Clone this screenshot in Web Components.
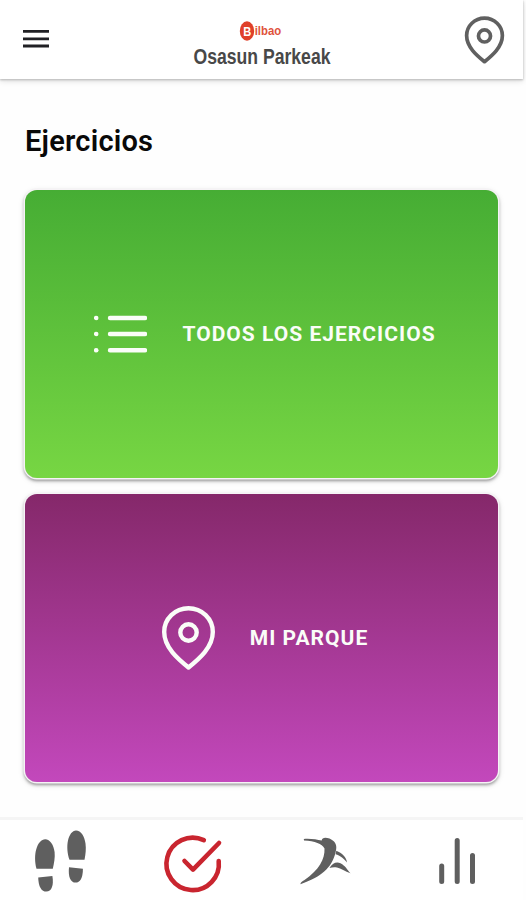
<!DOCTYPE html>
<html lang="es">
<head>
<meta charset="utf-8">
<title>Osasun Parkeak</title>
<style>
html, body { margin: 0; background: #fefefe; }
body { width: 526px; height: 900px; overflow: hidden; font-family: Roboto, "Liberation Sans", sans-serif; }
</style>
</head>
<body>
<park-app></park-app>
<script>
const define = (name, html) => {
  const template = document.createElement('template');
  template.innerHTML = html;
  customElements.define(name, class extends HTMLElement {
    constructor() {
      super();
      this.attachShadow({ mode: 'open' }).append(template.content.cloneNode(true));
    }
  });
};

define('pin-icon', `
<style>:host{display:block;flex:none} svg{display:block;width:100%;height:100%;overflow:visible} path,circle{stroke-width:var(--pin-stroke,4.400)}</style>
<svg viewBox="0 0 53 64" fill="none" stroke="currentColor" stroke-linejoin="round">
  <path d="M26.500 61.500C16 53 2.200 41.500 2.200 26A24.300 23.800 0 0 1 50.800 26C50.800 41.500 37 53 26.500 61.500Z"/>
  <circle cx="26.500" cy="26.500" r="8.200"/>
</svg>`);

define('list-icon', `
<style>:host{display:block;flex:none;width:53px;height:38px} svg{display:block}</style>
<svg width="53" height="38" viewBox="0 0 53 38" fill="currentColor">
  <circle cx="2.200" cy="3" r="2.300"/><circle cx="2.200" cy="19" r="2.300"/><circle cx="2.200" cy="35.300" r="2.300"/>
  <path d="M16 3H51M16 19H51M16 35.300H51" stroke="currentColor" stroke-width="4.400" stroke-linecap="round"/>
</svg>`);

define('brand-logo', `
<style>:host{display:block} svg{display:block;overflow:visible}</style>
<svg width="140" height="50" viewBox="0 0 140 50">
  <ellipse cx="55" cy="11" rx="7.200" ry="9.700" fill="#e0402a"/>
  <text x="51.200" y="15.600" font-family="Liberation Sans, sans-serif" font-weight="700" font-size="12.500" fill="#fff" textLength="8" lengthAdjust="spacingAndGlyphs">B</text>
  <text x="62.700" y="15.400" font-family="Liberation Sans, sans-serif" font-weight="700" font-size="12.500" fill="#e0523c" textLength="26.500" lengthAdjust="spacingAndGlyphs">ilbao</text>
  <text x="1.500" y="44" font-family="Liberation Sans, sans-serif" font-weight="700" font-size="21.500" fill="#484848" textLength="137" lengthAdjust="spacingAndGlyphs">Osasun Parkeak</text>
</svg>`);

define('top-bar', `
<style>
:host{display:grid;grid-template-columns:1fr 190px 1fr;box-sizing:border-box;height:79px;background:#fff;box-shadow:0 1px 2px #b8b8b8,0 2px 6px #dedede;position:relative}
.menu{margin:29px 0 0 22px}
brand-logo{margin:20px 25px 0}
pin-icon{width:39px;height:48px;margin:16px 19px 0 0;justify-self:end;color:#606060;--pin-stroke:5}
</style>
<svg class="menu" width="28" height="20" viewBox="0 0 28 20"><path d="M1 2.400H27M1 9.800H27M1 17H27" stroke="#202024" stroke-width="2.800"/></svg>
<brand-logo></brand-logo>
<pin-icon></pin-icon>`);

define('action-card', `
<style>
:host{display:flex;align-items:center;justify-content:center;gap:35px;box-sizing:border-box;height:288px;padding-left:6px;color:#fafdf8;
 border-radius:12px;background:linear-gradient(var(--from),var(--to));box-shadow:0 0 0 1.500px #f6f3f6,0 2px 3px 1px #999,0 2px 6px 1px #e2e2e2}
.label{font-weight:700;font-size:21px;line-height:24px;letter-spacing:1.020px;margin-right:-1.020px;white-space:nowrap}
</style>
<slot name="icon"></slot><span class="label"><slot></slot></span>`);

define('nav-bar', `
<style>
:host{display:grid;grid-template-columns:124px 136px 130px 133px;height:83px;box-sizing:border-box;border-top:3px solid #f5f5f5;background:#fff;color:#5f5f5f}
svg{display:block;width:100%;height:80px}
</style>
<svg viewBox="0 820 124 80" fill="currentColor">
  <path d="M36.500 868.800C34.600 862 34.800 854 36.200 849.500C38 843 41.500 839.300 45.200 839.300C50 839.300 53.700 845 54.600 852C55.200 857.500 54 863.500 52.800 868.800Z"/>
  <path d="M38.200 877.500L52.400 876C54 885.500 51.500 891.600 46.300 891.600C41.500 891.600 38.500 887 38.200 877.500Z"/>
  <path d="M69.500 859.700C67.200 854 66.800 846 67.900 841C69.200 834.500 72.400 830.400 76 830.400C81 830.400 84.600 836 85.500 843.500C86.200 849 85.700 854 84.500 859.700Z"/>
  <path d="M69 867.200L82.900 868.700C83 878 80 882.600 75.500 882.600C70.500 882.600 68 877 69 867.200Z"/>
</svg>
<svg viewBox="124 820 136 80" fill="none" stroke="#c9252f" stroke-width="4.600" stroke-linecap="round" stroke-linejoin="round">
  <path d="M203.800 840.200A26.200 26.200 0 1 0 218.700 861"/><path d="M184.500 861L193 869.600L219 843"/>
</svg>
<svg viewBox="260 820 130 80" fill="currentColor">
  <path d="M303.800 839C310 838.300 317 839.700 321.700 840.500C322 837.400 325.500 837 329.500 838.600C334.500 840.800 337 844.500 336.200 849C335.700 852 335.300 854 334.500 856C331 867 322 877 300.400 884.200C300.500 882.500 302 881.500 304.500 880C319 870 325 859 324.500 848.500C322 843.500 315 841.200 304 840.500Z"/>
  <path d="M336.300 850.700C342 853 346.500 857 347 862.500C344.500 859 340 855.500 335.600 854.200Z"/>
  <path d="M329.500 868C332 863.200 336.500 861.300 340.500 863.200C345.500 865.800 347 869.500 350.500 873.300C345 871.500 341 868.500 337 867.500C334 866.900 332 867.300 329.500 868Z"/>
</svg>
<svg viewBox="390 820 133 80" stroke="currentColor" stroke-width="5" stroke-linecap="round">
  <path d="M441.700 866V881.500M457.200 840.500V881.500M472.500 855.500V881.500"/>
</svg>`);

define('park-app', `
<style>
:host{display:flex;flex-direction:column;width:523px;height:900px;background:#fefefe}
main{flex:1;display:flex;flex-direction:column;padding:0 25px}
h1{margin:45px 0 0;height:66px;font-size:29px;line-height:34px;font-weight:600;letter-spacing:.2px;color:#090909}
action-card + action-card{margin-top:16px}
.green{--from:#46ad34;--to:#77d643}
.purple{--from:#85286a;--to:#c348bc}
.purple pin-icon{width:53px;height:64px}
</style>
<top-bar></top-bar>
<main>
  <h1>Ejercicios</h1>
  <action-card class="green"><list-icon slot="icon"></list-icon>TODOS LOS EJERCICIOS</action-card>
  <action-card class="purple"><pin-icon slot="icon"></pin-icon>MI PARQUE</action-card>
</main>
<nav-bar></nav-bar>`);
</script>
</body>
</html>
